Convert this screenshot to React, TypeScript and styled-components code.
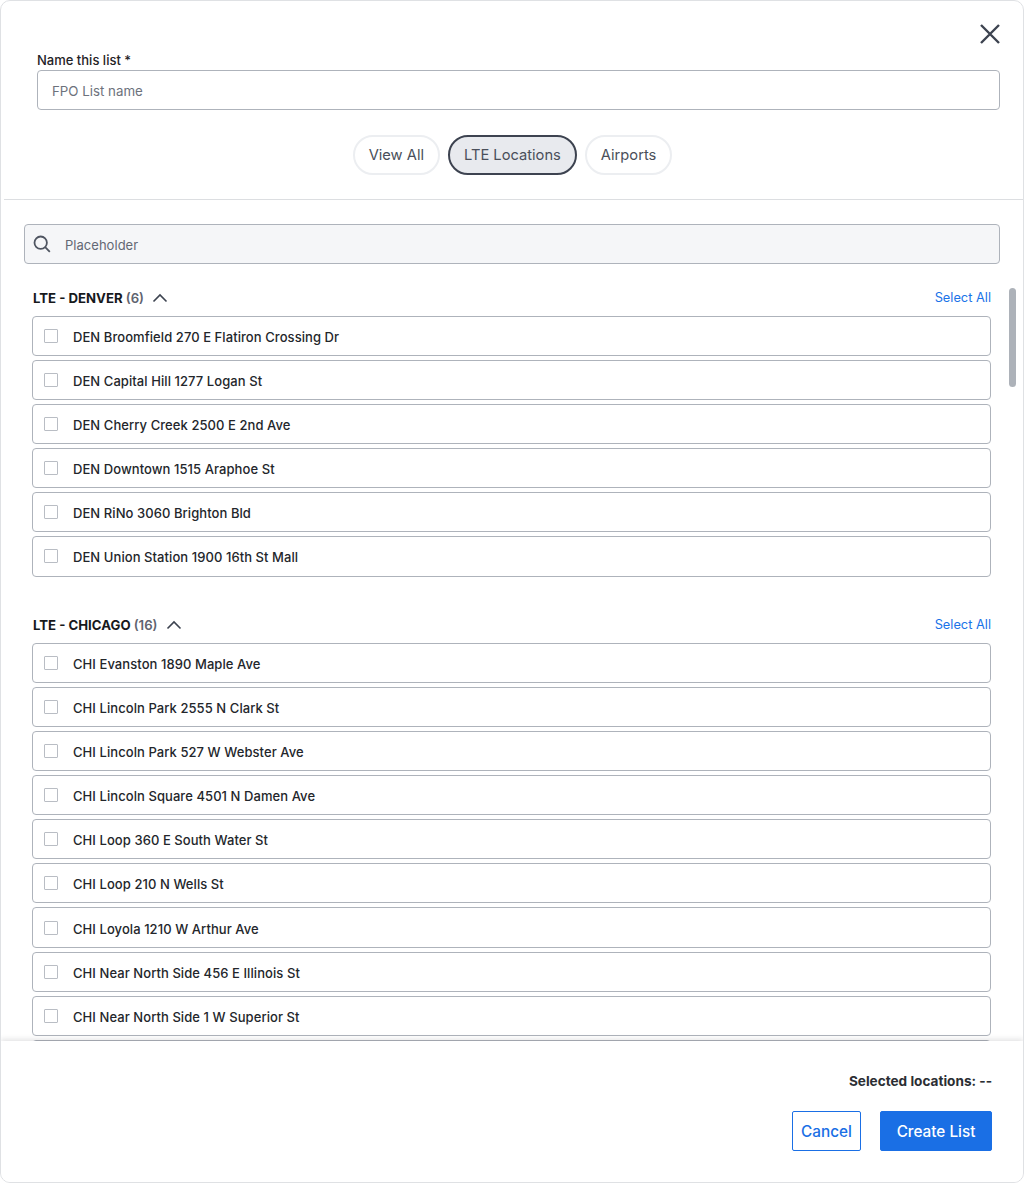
import React from 'react';
import styled, { createGlobalStyle } from 'styled-components';

const GlobalStyle = createGlobalStyle`
  html, body {
    margin: 0;
    padding: 0;
    background: #ffffff;
    font-family: Inter, "Liberation Sans", sans-serif;
    color: #23262b;
  }
  * { box-sizing: border-box; }
`;

// Data
const denver = [
  'DEN Broomfield 270 E Flatiron Crossing Dr',
  'DEN Capital Hill 1277 Logan St',
  'DEN Cherry Creek 2500 E 2nd Ave',
  'DEN Downtown 1515 Araphoe St',
  'DEN RiNo 3060 Brighton Bld',
  'DEN Union Station 1900 16th St Mall',
];

// the last entry sits behind the footer, only its top border shows
const chicago = [
  'CHI Evanston 1890 Maple Ave',
  'CHI Lincoln Park 2555 N Clark St',
  'CHI Lincoln Park 527 W Webster Ave',
  'CHI Lincoln Square 4501 N Damen Ave',
  'CHI Loop 360 E South Water St',
  'CHI Loop 210 N Wells St',
  'CHI Loyola 1210 W Arthur Ave',
  'CHI Near North Side 456 E Illinois St',
  'CHI Near North Side 1 W Superior St',
  '',
];

// Styled components
const Modal = styled.div`
  position: relative;
  width: 1024px;
  height: 1183px;
  display: flex;
  flex-direction: column;
  background: #ffffff;
  border: 1px solid #dfe1e4;
  border-radius: 10px;
  overflow: hidden;
`;

const Header = styled.header`
  position: relative;
  flex: none;
  height: 199px;
  margin-left: 3px;
  padding: 51px 23px 0 33px;
  border-bottom: 1px solid #dcdee1;
`;

const CloseButton = styled.button`
  position: absolute;
  top: 21px;
  right: 21px;
  width: 24px;
  height: 24px;
  padding: 0;
  border: none;
  background: none;
  color: #3d4350;
`;

const Label = styled.label`
  display: block;
  height: 18px;
  font-size: 13px;
  line-height: 17px;
  font-weight: 500;
  color: #1f2226;
`;

const NameInput = styled.div`
  height: 40px;
  padding: 2px 14px 0;
  display: flex;
  align-items: center;
  border: 1px solid #aeb3bb;
  border-radius: 4px;
  font-size: 13.3px;
  color: #6d727c;
`;

const Chips = styled.div`
  display: flex;
  justify-content: center;
  gap: 8px;
  margin-top: 25px;
  padding-right: 12px;
`;

const Chip = styled.div<{ $active?: boolean }>`
  height: 40px;
  padding: 0 14px;
  display: flex;
  align-items: center;
  border-radius: 20px;
  font-size: 14.7px;
  color: #4a4f5a;
  background: ${({ $active }) => ($active ? '#e8eaee' : '#ffffff')};
  border: ${({ $active }) => ($active ? '2px solid #3d4350' : '2px solid #eceef1')};
`;

const SearchWrap = styled.div`
  flex: none;
  padding: 24px 23px 0 23px;
`;

const SearchBox = styled.div`
  height: 40px;
  padding: 0 7px;
  display: flex;
  align-items: center;
  gap: 13px;
  background: #f5f6f8;
  border: 1px solid #aeb3bb;
  border-radius: 4px;
`;

const SearchText = styled.span`
  padding-top: 2px;
  font-size: 13px;
  letter-spacing: 0.03px;
  color: #636874;
`;

const ListArea = styled.div`
  flex: 1;
  min-height: 0;
  overflow: hidden;
  padding: 24px 32px 0 31px;
`;

const Section = styled.section`
  & + & {
    margin-top: 38.4px;
  }
`;

const SectionHeader = styled.div`
  height: 19.4px;
  display: flex;
  align-items: center;
  justify-content: space-between;
  padding-left: 1px;
`;

const SectionTitle = styled.div`
  display: flex;
  align-items: center;
  gap: 8px;
  font-size: 13.2px;
  font-weight: 700;
  color: #17191c;
`;

const Count = styled.span`
  font-weight: 600;
  color: #5f6470;
`;

const Chevron = styled.svg`
  display: block;
  color: #3d4350;
`;

const SelectAll = styled.a`
  font-size: 12.8px;
  color: #1a73e8;
`;

const Rows = styled.div`
  display: flex;
  flex-direction: column;
  gap: 4px;
  margin-top: 8.4px;
`;

const Row = styled.div`
  flex: none;
  height: 40.125px;
  padding: 2px 11px 0;
  display: flex;
  align-items: center;
  gap: 15px;
  background: #ffffff;
  border: 1px solid #aeb3bb;
  border-radius: 4px;
  font-size: 13px;
  font-weight: 500;
  letter-spacing: 0.07px;
  color: #23262b;
`;

const Checkbox = styled.span`
  flex: none;
  width: 14px;
  height: 14px;
  margin-top: -2px;
  border: 1px solid #b9bdc4;
  border-radius: 1px;
`;

const Scrollbar = styled.div`
  position: absolute;
  top: 287px;
  right: 7px;
  width: 7px;
  height: 99px;
  border-radius: 4px;
  background: #adb2b9;
`;

const Footer = styled.footer`
  flex: none;
  height: 141px;
  padding: 32px 31px 0 0;
  display: flex;
  flex-direction: column;
  align-items: flex-end;
  background: #ffffff;
  box-shadow: 0 -2px 5px rgba(30, 35, 45, 0.12);
  position: relative;
`;

const SelectedText = styled.div`
  height: 16px;
  font-size: 13.6px;
  line-height: 16px;
  font-weight: 700;
  color: #2b2e33;
`;

const Buttons = styled.div`
  display: flex;
  gap: 19px;
  margin-top: 22px;
`;

const Button = styled.button<{ $primary?: boolean }>`
  height: 40px;
  padding: 0;
  width: ${({ $primary }) => ($primary ? '112px' : '69px')};
  border-radius: 2px;
  font-family: inherit;
  font-size: 15.3px;
  font-weight: 500;
  border: 1px solid #1a6fe5;
  background: ${({ $primary }) => ($primary ? '#1a6fe5' : '#ffffff')};
  color: ${({ $primary }) => ($primary ? '#ffffff' : '#1a6fe5')};
`;

const LocationSection: React.FC<{ title: string; count: number; items: string[] }> = ({
  title,
  count,
  items,
}) => (
  <Section>
    <SectionHeader>
      <SectionTitle>
        <span>
          {title} <Count>({count})</Count>
        </span>
        <Chevron width="16" height="16" viewBox="0 0 16 16" fill="none">
          <path d="M1.5 11.5L8 5l6.5 6.5" stroke="currentColor" strokeWidth="1.6" />
        </Chevron>
      </SectionTitle>
      <SelectAll>Select All</SelectAll>
    </SectionHeader>
    <Rows>
      {items.map((item) => (
        <Row key={item}>
          <Checkbox />
          {item}
        </Row>
      ))}
    </Rows>
  </Section>
);

export default function App() {
  return (
    <>
      <GlobalStyle />
      <Modal>
        <Header>
          <CloseButton aria-label="Close">
            <svg width="24" height="24" viewBox="0 0 24 24" fill="none">
              <path d="M3 3l18 18M21 3L3 21" stroke="currentColor" strokeWidth="2.4" />
            </svg>
          </CloseButton>
          <Label>Name this list *</Label>
          <NameInput>FPO List name</NameInput>
          <Chips>
            <Chip>View All</Chip>
            <Chip $active>LTE Locations</Chip>
            <Chip>Airports</Chip>
          </Chips>
        </Header>
        <SearchWrap>
          <SearchBox>
            <svg width="20" height="20" viewBox="0 0 20 20" fill="none">
              <circle cx="8.7" cy="8.7" r="6.2" stroke="#4f5561" strokeWidth="1.8" />
              <path d="M13.2 13.2l4.6 4.6" stroke="#4f5561" strokeWidth="1.8" />
            </svg>
            <SearchText>Placeholder</SearchText>
          </SearchBox>
        </SearchWrap>
        <ListArea>
          <LocationSection title="LTE - DENVER" count={6} items={denver} />
          <LocationSection title="LTE - CHICAGO" count={16} items={chicago} />
        </ListArea>
        <Scrollbar />
        <Footer>
          <SelectedText>Selected locations: --</SelectedText>
          <Buttons>
            <Button>Cancel</Button>
            <Button $primary>Create List</Button>
          </Buttons>
        </Footer>
      </Modal>
    </>
  );
}
